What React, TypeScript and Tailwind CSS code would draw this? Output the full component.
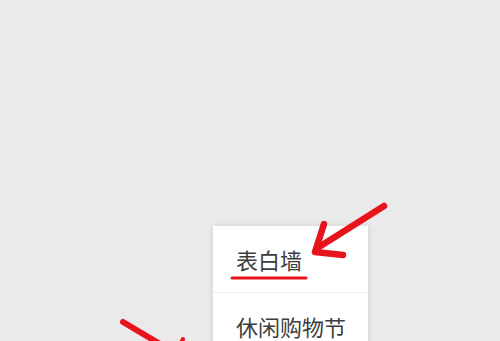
import React from 'react';

const menuItems = ['表白墙', '休闲购物节'];

const App: React.FC = () => {
  return (
    <div className="relative h-[341px] w-[500px] overflow-hidden bg-[#ebeaea] font-['Noto_Sans_CJK_SC',sans-serif]">
      {/* dropdown menu */}
      <div className="absolute left-[213px] top-[226px] w-[155px] bg-white shadow-[0_0_6px_rgba(0,0,0,0.12)]">
        {menuItems.map((item, i) => (
          <div
            key={item}
            className={`flex h-[66px] items-center pl-[23px] text-[22px] leading-none text-[#3d3d3d] ${i > 0 ? 'border-t border-[#ececec]' : ''}`}
          >
            {item}
          </div>
        ))}
      </div>

      {/* annotations */}
      <svg className="pointer-events-none absolute inset-0" width="500" height="341" viewBox="0 0 500 341">
        <g stroke="#e8141b" strokeLinecap="round" strokeLinejoin="round" fill="none">
          <line x1="232" y1="278" x2="306" y2="278" strokeWidth="3" />
          <line x1="384" y1="206" x2="319" y2="247" strokeWidth="6.5" />
          <polyline points="324,224 315,252 343,255" strokeWidth="6.5" />
          <line x1="123" y1="322" x2="160" y2="344" strokeWidth="6" />
          <line x1="183" y1="339" x2="180" y2="345" strokeWidth="4" />
        </g>
      </svg>
    </div>
  );
};

export default App;
